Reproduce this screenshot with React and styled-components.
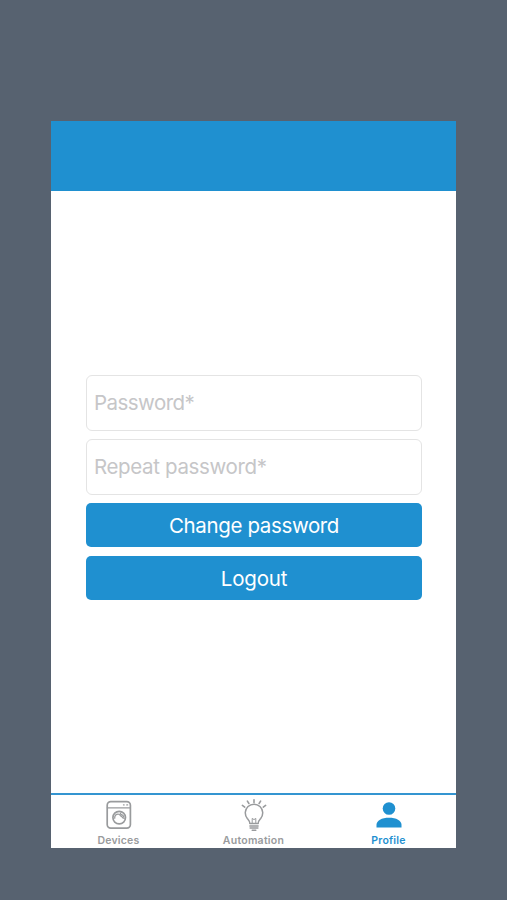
import React from "react";
import styled, { createGlobalStyle } from "styled-components";

const GlobalStyle = createGlobalStyle`
  * { box-sizing: border-box; }
  html, body { margin: 0; padding: 0; }
  body { background: #576270; font-family: Inter, "Liberation Sans", sans-serif; }
`;

const Backdrop = styled.div`
  width: 507px;
  height: 900px;
  padding: 121px 51px 0;
  background: #576270;
  overflow: hidden;
`;

const Phone = styled.div`
  height: 727px;
  display: flex;
  flex-direction: column;
  background: #fff;
`;

const Header = styled.header`
  height: 69.5px;
  flex: none;
  background: #1f90d0;
`;

const Form = styled.form`
  flex: 1;
  display: flex;
  flex-direction: column;
  padding: 184px 34px 0 35px;
`;

const Field = styled.input`
  height: 56px;
  flex: none;
  width: 100%;
  margin-bottom: 8.4px;
  padding: 0 7px;
  border: 1px solid #e4e4e4;
  border-radius: 6px;
  background: #fff;
  outline: none;
  font-family: inherit;
  font-size: 20.5px;
  letter-spacing: ${(p) => p.$spacing};
  &::placeholder { color: #c6c6c8; opacity: 1; }
`;

const Button = styled.button`
  height: 44px;
  flex: none;
  margin-bottom: 8.4px;
  padding: 1px 0 0;
  border: 0;
  border-radius: 5px;
  background: #1f90d0;
  color: #fff;
  font-family: inherit;
  font-size: 20.5px;
  letter-spacing: ${(p) => p.$spacing};
`;

const TabBar = styled.nav`
  height: 55.5px;
  flex: none;
  display: grid;
  grid-template-columns: repeat(3, 1fr);
  border-top: 2px solid #3495d1;
`;

const Tab = styled.a`
  display: flex;
  flex-direction: column;
  align-items: center;
  padding-top: 4.5px;
  color: ${(p) => (p.$active ? "#1f90d0" : "#999b9d")};
`;

const TabIcon = styled.svg`
  display: block;
  width: 34px;
  height: 34px;
  fill: none;
  stroke: currentColor;
  stroke-linecap: round;
  stroke-linejoin: round;
`;

const TabLabel = styled.span`
  margin-top: 1px;
  font-size: 10.5px;
  line-height: 13px;
  font-weight: 600;
  letter-spacing: ${(p) => p.$spacing};
`;

const WasherIcon = () => (
  <TabIcon viewBox="0 0 34 34" strokeWidth="1.7">
    <rect x="5.2" y="2.6" width="23.2" height="26.6" rx="3.6" />
    <path d="M5.4 8.8h22.8" strokeWidth="1.3" />
    <path d="M21.5 5.9h.6M24.8 5.9h.8" strokeWidth="1.3" />
    <circle cx="17.2" cy="18.6" r="6.3" />
    <path d="M12.7 19.2c-.3-2.6 1.7-4.4 3.8-4.1 1.6.1 1.5 1.9 2.9 2.3 1.2.4 1.1 2 2.9 1.8M18.3 14.2c.2 1.5 1.6 1.5 2.4 2.1.5.4.8.9 1 1.4" strokeWidth="1.3" />
  </TabIcon>
);

const BulbIcon = () => (
  <TabIcon viewBox="0 0 34 34" strokeWidth="1.5">
    <path d="M12.8 24.4c0-2.5-1.2-3.5-2.5-5a8.7 8.7 0 1 1 13.4 0c-1.3 1.5-2.5 2.5-2.5 5z" />
    <path d="M15.2 23.8v-4.4l1.8 1.2 1.8-1.2v4.4" strokeWidth="1" />
    <path d="M12.9 26.9h8.2M13.1 29.1h7.8M15.2 31.2h3.6" />
    <path d="M17 .8v2.6M10.4 2.1l1.5 2.4M23.6 2.1l-1.5 2.4M5.4 6.4l2.3 1.7M28.6 6.4l-2.3 1.7" strokeWidth="1.6" />
  </TabIcon>
);

const ProfileIcon = () => (
  <TabIcon viewBox="0 0 34 34">
    <g fill="currentColor" stroke="none">
      <circle cx="17" cy="9.5" r="6.3" />
      <path d="M4.5 28.5v-2.7c0-4.4 5.2-7.1 12.5-7.1s12.5 2.7 12.5 7.1v2.7z" />
    </g>
  </TabIcon>
);

export default function App() {
  return (
    <>
      <GlobalStyle />
      <Backdrop>
        <Phone>
          <Header />
          <Form onSubmit={(e) => e.preventDefault()}>
            <Field type="text" placeholder="Password*" $spacing="-0.54px" />
            <Field type="text" placeholder="Repeat password*" $spacing="-0.36px" />
            <Button type="button" $spacing="-0.36px">Change password</Button>
            <Button type="button" $spacing="-0.2px">Logout</Button>
          </Form>
          <TabBar>
            <Tab><WasherIcon /><TabLabel $spacing="0.2px">Devices</TabLabel></Tab>
            <Tab><BulbIcon /><TabLabel $spacing="0.25px">Automation</TabLabel></Tab>
            <Tab $active><ProfileIcon /><TabLabel $spacing="0.2px">Profile</TabLabel></Tab>
          </TabBar>
        </Phone>
      </Backdrop>
    </>
  );
}
